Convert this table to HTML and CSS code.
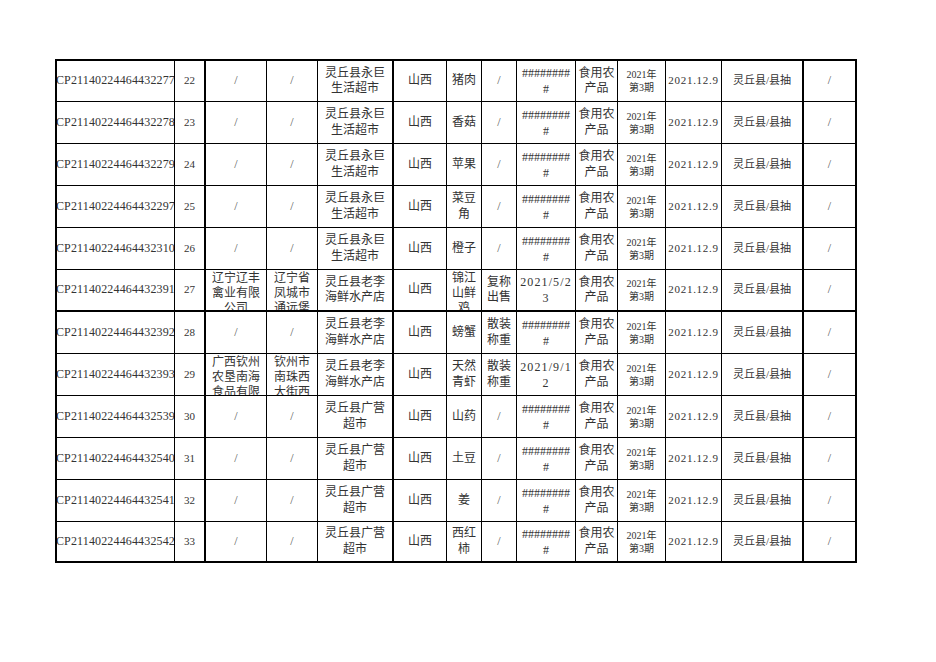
FILE: index.html
```html
<!DOCTYPE html>
<html lang="zh-CN">
<head>
<meta charset="utf-8">
<title>抽检数据</title>
<link rel="stylesheet" href="styles.css">
</head>
<body>
<div class="sheet">
  <div class="r">
    <div class="c id"><span>NCP21140224464432277</span></div><div class="c n">22</div><div class="c s">/</div><div class="c s">/</div>
    <div class="c">灵丘县永巨<br>生活超市</div><div class="c">山西</div><div class="c">猪肉</div><div class="c s">/</div>
    <div class="c h">########<br>#</div><div class="c">食用农<br>产品</div><div class="c p">2021年<br>第3期</div><div class="c d">2021.12.9</div><div class="c t">灵丘县/县抽</div><div class="c s">/</div>
  </div>
  <div class="r">
    <div class="c id"><span>NCP21140224464432278</span></div><div class="c n">23</div><div class="c s">/</div><div class="c s">/</div>
    <div class="c">灵丘县永巨<br>生活超市</div><div class="c">山西</div><div class="c">香菇</div><div class="c s">/</div>
    <div class="c h">########<br>#</div><div class="c">食用农<br>产品</div><div class="c p">2021年<br>第3期</div><div class="c d">2021.12.9</div><div class="c t">灵丘县/县抽</div><div class="c s">/</div>
  </div>
  <div class="r">
    <div class="c id"><span>NCP21140224464432279</span></div><div class="c n">24</div><div class="c s">/</div><div class="c s">/</div>
    <div class="c">灵丘县永巨<br>生活超市</div><div class="c">山西</div><div class="c">苹果</div><div class="c s">/</div>
    <div class="c h">########<br>#</div><div class="c">食用农<br>产品</div><div class="c p">2021年<br>第3期</div><div class="c d">2021.12.9</div><div class="c t">灵丘县/县抽</div><div class="c s">/</div>
  </div>
  <div class="r">
    <div class="c id"><span>NCP21140224464432297</span></div><div class="c n">25</div><div class="c s">/</div><div class="c s">/</div>
    <div class="c">灵丘县永巨<br>生活超市</div><div class="c">山西</div><div class="c">菜豆<br>角</div><div class="c s">/</div>
    <div class="c h">########<br>#</div><div class="c">食用农<br>产品</div><div class="c p">2021年<br>第3期</div><div class="c d">2021.12.9</div><div class="c t">灵丘县/县抽</div><div class="c s">/</div>
  </div>
  <div class="r">
    <div class="c id"><span>NCP21140224464432310</span></div><div class="c n">26</div><div class="c s">/</div><div class="c s">/</div>
    <div class="c">灵丘县永巨<br>生活超市</div><div class="c">山西</div><div class="c">橙子</div><div class="c s">/</div>
    <div class="c h">########<br>#</div><div class="c">食用农<br>产品</div><div class="c p">2021年<br>第3期</div><div class="c d">2021.12.9</div><div class="c t">灵丘县/县抽</div><div class="c s">/</div>
  </div>
  <div class="r thick">
    <div class="c id"><span>NCP21140224464432391</span></div><div class="c n">27</div><div class="c top">辽宁辽丰<br>禽业有限<br>公司</div><div class="c top">辽宁省<br>凤城市<br>通远堡</div>
    <div class="c">灵丘县老李<br>海鲜水产店</div><div class="c">山西</div><div class="c top">锦江<br>山鲜<br>鸡</div><div class="c">复称<br>出售</div>
    <div class="c h ds">2021/5/2<br>3</div><div class="c">食用农<br>产品</div><div class="c p">2021年<br>第3期</div><div class="c d">2021.12.9</div><div class="c t">灵丘县/县抽</div><div class="c s">/</div>
  </div>
  <div class="r">
    <div class="c id"><span>NCP21140224464432392</span></div><div class="c n">28</div><div class="c s">/</div><div class="c s">/</div>
    <div class="c">灵丘县老李<br>海鲜水产店</div><div class="c">山西</div><div class="c">螃蟹</div><div class="c">散装<br>称重</div>
    <div class="c h">########<br>#</div><div class="c">食用农<br>产品</div><div class="c p">2021年<br>第3期</div><div class="c d">2021.12.9</div><div class="c t">灵丘县/县抽</div><div class="c s">/</div>
  </div>
  <div class="r">
    <div class="c id"><span>NCP21140224464432393</span></div><div class="c n">29</div><div class="c top">广西钦州<br>农垦南海<br>食品有限</div><div class="c top">钦州市<br>南珠西<br>大街西</div>
    <div class="c">灵丘县老李<br>海鲜水产店</div><div class="c">山西</div><div class="c">天然<br>青虾</div><div class="c">散装<br>称重</div>
    <div class="c h ds">2021/9/1<br>2</div><div class="c">食用农<br>产品</div><div class="c p">2021年<br>第3期</div><div class="c d">2021.12.9</div><div class="c t">灵丘县/县抽</div><div class="c s">/</div>
  </div>
  <div class="r">
    <div class="c id"><span>NCP21140224464432539</span></div><div class="c n">30</div><div class="c s">/</div><div class="c s">/</div>
    <div class="c">灵丘县广营<br>超市</div><div class="c">山西</div><div class="c">山药</div><div class="c s">/</div>
    <div class="c h">########<br>#</div><div class="c">食用农<br>产品</div><div class="c p">2021年<br>第3期</div><div class="c d">2021.12.9</div><div class="c t">灵丘县/县抽</div><div class="c s">/</div>
  </div>
  <div class="r">
    <div class="c id"><span>NCP21140224464432540</span></div><div class="c n">31</div><div class="c s">/</div><div class="c s">/</div>
    <div class="c">灵丘县广营<br>超市</div><div class="c">山西</div><div class="c">土豆</div><div class="c s">/</div>
    <div class="c h">########<br>#</div><div class="c">食用农<br>产品</div><div class="c p">2021年<br>第3期</div><div class="c d">2021.12.9</div><div class="c t">灵丘县/县抽</div><div class="c s">/</div>
  </div>
  <div class="r">
    <div class="c id"><span>NCP21140224464432541</span></div><div class="c n">32</div><div class="c s">/</div><div class="c s">/</div>
    <div class="c">灵丘县广营<br>超市</div><div class="c">山西</div><div class="c">姜</div><div class="c s">/</div>
    <div class="c h">########<br>#</div><div class="c">食用农<br>产品</div><div class="c p">2021年<br>第3期</div><div class="c d">2021.12.9</div><div class="c t">灵丘县/县抽</div><div class="c s">/</div>
  </div>
  <div class="r thick">
    <div class="c id"><span>NCP21140224464432542</span></div><div class="c n">33</div><div class="c s">/</div><div class="c s">/</div>
    <div class="c">灵丘县广营<br>超市</div><div class="c">山西</div><div class="c">西红<br>柿</div><div class="c s">/</div>
    <div class="c h">########<br>#</div><div class="c">食用农<br>产品</div><div class="c p">2021年<br>第3期</div><div class="c d">2021.12.9</div><div class="c t">灵丘县/县抽</div><div class="c s">/</div>
  </div>
</div>
</body>
</html>
```
FILE: styles.css
```css
html, body {
  margin: 0;
  background: #ffffff;
}
body {
  padding: 59px 0 0 55px;
}
.sheet {
  display: grid;
  grid-template-columns: 118px 31px 61px 51px 76px 53px 35px 35px 59px 42px 48px 56px 82px 53px;
  grid-template-rows: 41px repeat(10, 42px) 41px;
  width: max-content;
  border-left: 2px solid #000;
  border-top: 2px solid #000;
}
.r {
  display: contents;
}
.c {
  box-sizing: border-box;
  border-right: 1px solid #000;
  border-bottom: 1px solid #000;
  display: flex;
  align-items: center;
  justify-content: center;
  overflow: hidden;
  text-align: center;
  font-family: "Liberation Serif", "Noto Sans CJK SC", serif;
  font-size: 12px;
  line-height: 15.5px;
  color: #333333;
  white-space: nowrap;
}
.r > .c:nth-child(2),
.r > .c:nth-child(5),
.r > .c:nth-child(13),
.r > .c:nth-child(14) {
  border-right-width: 2px;
}
.thick > .c {
  border-bottom-width: 2px;
}
.id {
  justify-content: flex-end;
}
.id span {
  flex: none;
  font-size: 12px;
  letter-spacing: 0.15px;
  margin-right: -1px;
}
.n {
  font-size: 11px;
}
.s {
  font-size: 12px;
  color: #555555;
}
.top {
  align-items: flex-start;
  padding-top: 1px;
  line-height: 15px;
}
.h {
  line-height: 16px;
}
.ds {
  letter-spacing: 1.1px;
}
.p {
  font-size: 10px;
  line-height: 13px;
}
.d {
  font-size: 11px;
  letter-spacing: 0.7px;
}
.t {
  font-size: 11px;
}
```
